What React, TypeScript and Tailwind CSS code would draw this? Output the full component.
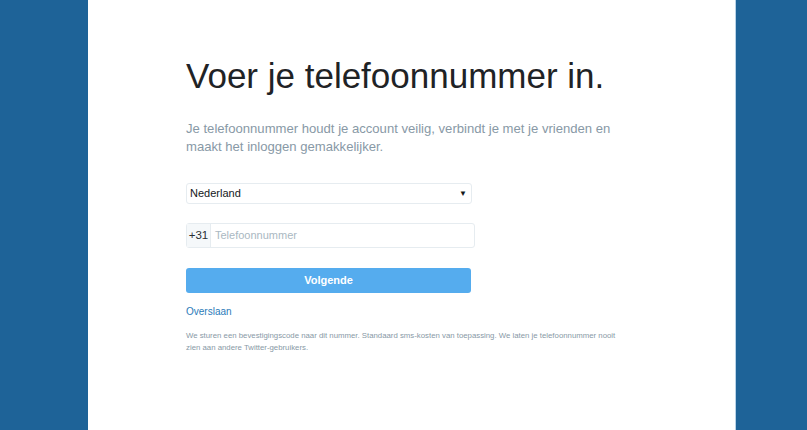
import React from "react";

const App: React.FC = () => {
  return (
    <div className="h-[430px] w-full bg-[#1e6398] flex font-['Liberation_Sans',Arial,sans-serif] overflow-hidden">
      <div className="ml-[88px] w-[648px] h-full bg-white border-r border-[#b9d3e8]">
        <div className="pl-[98px] pt-[52px] w-[540px]">
          {/* Heading */}
          <h1 className="text-[35px] leading-[48px] text-[#1f2326]">
            Voer je telefoonnummer in.
          </h1>

          {/* Subheading */}
          <p className="mt-[20px] text-[13.1px] leading-[18px] text-[#8899a6]">
            Je telefoonnummer houdt je account veilig, verbindt je met je vrienden en
            maakt het inloggen gemakkelijker.
          </p>

          {/* Country */}
          <div className="mt-[27px] w-[286px] h-[21px] border border-[#e6ecf0] rounded-[3px] flex items-center justify-between pl-[3px] pr-[4px]">
            <span className="text-[11px] text-[#14171a]">Nederland</span>
            <span className="text-[8px] text-[#14171a]">▼</span>
          </div>

          {/* Phone */}
          <div className="mt-[19px] w-[289px] h-[25px] border border-[#e6ecf0] rounded-[3px] flex">
            <div className="w-[24px] bg-[#f5f8fa] border-r border-[#e6ecf0] flex items-center justify-center text-[11.5px] text-[#292f33]">
              +31
            </div>
            <div className="flex items-center pl-[4px] text-[11px] text-[#aab8c2]">
              Telefoonnummer
            </div>
          </div>

          {/* Button */}
          <button className="mt-[20px] w-[285px] h-[25px] bg-[#55acee] rounded-[3px] text-white text-[11px] font-bold">
            Volgende
          </button>

          {/* Skip */}
          <div className="mt-[5px]">
            <a className="text-[10px] text-[#2b7bb9]">Overslaan</a>
          </div>

          {/* Note */}
          <p className="mt-[8px] text-[7.8px] leading-[12px] text-[#8899a6] w-[436px]">
            We sturen een bevestigingscode naar dit nummer. Standaard sms-kosten van toepassing. We laten je telefoonnummer nooit
            zien aan andere Twitter-gebruikers.
          </p>
        </div>
      </div>
    </div>
  );
};

export default App;
